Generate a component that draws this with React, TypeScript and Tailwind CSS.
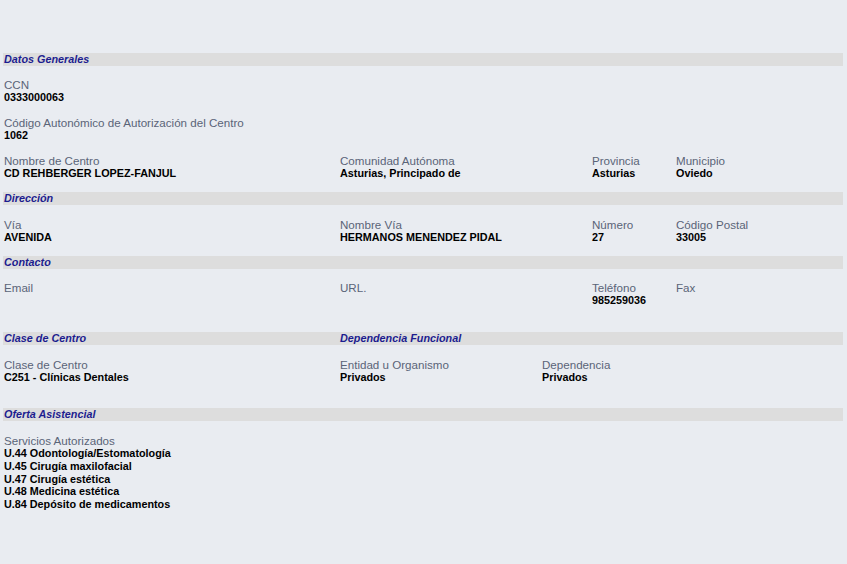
import React from 'react';

interface Field {
    label: string;
    value?: string;
}

const SectionBar: React.FC<{ titles: { text: string; col: string }[]; cols: string }> = ({ titles, cols }) => (
    <div className={`grid ${cols} h-[13px] bg-[#dddddd]`}>
        {titles.map(t => (
            <div key={t.text} className={`${t.col} pl-[1px] text-[10.8px] leading-[13px] font-bold italic text-[#1c1c8f]`}>
                {t.text}
            </div>
        ))}
    </div>
);

const FieldBlock: React.FC<{ field: Field }> = ({ field }) => (
    <div className="pl-[1px]">
        <div className="text-[11.6px] leading-[13px] text-[#5a6478]">{field.label}</div>
        <div className="text-[10.8px] leading-[13px] font-bold text-black h-[13px]">{field.value}</div>
    </div>
);

const FieldRow: React.FC<{ fields: Field[]; cols: string; className?: string }> = ({ fields, cols, className }) => (
    <div className={`grid ${cols} ${className || ''}`}>
        {fields.map(f => (
            <FieldBlock key={f.label} field={f} />
        ))}
    </div>
);

const fourCols = 'grid-cols-[336px_252px_84px_1fr]';
const threeCols = 'grid-cols-[336px_202px_1fr]';

const servicios = [
    'U.44 Odontología/Estomatología',
    'U.45 Cirugía maxilofacial',
    'U.47 Cirugía estética',
    'U.48 Medicina estética',
    'U.84 Depósito de medicamentos',
];

export default function App() {
    return (
        <div
            className="w-[847px] h-[564px] bg-[#e9ecf1] pt-[53px] pl-[3px] pr-[4px]"
            style={{ fontFamily: '"Liberation Sans", Arial, sans-serif' }}
        >
            <SectionBar cols="grid-cols-1" titles={[{ text: 'Datos Generales', col: '' }]} />
            <FieldRow className="mt-[12px]" cols="grid-cols-1" fields={[{ label: 'CCN', value: '0333000063' }]} />
            <FieldRow
                className="mt-[12px]"
                cols="grid-cols-1"
                fields={[{ label: 'Código Autonómico de Autorización del Centro', value: '1062' }]}
            />
            <FieldRow
                className="mt-[12px]"
                cols={fourCols}
                fields={[
                    { label: 'Nombre de Centro', value: 'CD REHBERGER LOPEZ-FANJUL' },
                    { label: 'Comunidad Autónoma', value: 'Asturias, Principado de' },
                    { label: 'Provincia', value: 'Asturias' },
                    { label: 'Municipio', value: 'Oviedo' },
                ]}
            />

            <div className="mt-[12px]">
                <SectionBar cols="grid-cols-1" titles={[{ text: 'Dirección', col: '' }]} />
            </div>
            <FieldRow
                className="mt-[13px]"
                cols={fourCols}
                fields={[
                    { label: 'Vía', value: 'AVENIDA' },
                    { label: 'Nombre Vía', value: 'HERMANOS MENENDEZ PIDAL' },
                    { label: 'Número', value: '27' },
                    { label: 'Código Postal', value: '33005' },
                ]}
            />

            <div className="mt-[12px]">
                <SectionBar cols="grid-cols-1" titles={[{ text: 'Contacto', col: '' }]} />
            </div>
            <FieldRow
                className="mt-[12px]"
                cols={fourCols}
                fields={[
                    { label: 'Email' },
                    { label: 'URL.' },
                    { label: 'Teléfono', value: '985259036' },
                    { label: 'Fax' },
                ]}
            />

            <div className="mt-[25px]">
                <SectionBar
                    cols={threeCols}
                    titles={[
                        { text: 'Clase de Centro', col: '' },
                        { text: 'Dependencia Funcional', col: 'col-span-2' },
                    ]}
                />
            </div>
            <FieldRow
                className="mt-[13px]"
                cols={threeCols}
                fields={[
                    { label: 'Clase de Centro', value: 'C251 - Clínicas Dentales' },
                    { label: 'Entidad u Organismo', value: 'Privados' },
                    { label: 'Dependencia', value: 'Privados' },
                ]}
            />

            <div className="mt-[24px]">
                <SectionBar cols="grid-cols-1" titles={[{ text: 'Oferta Asistencial', col: '' }]} />
            </div>
            <div className="mt-[13px] pl-[1px]">
                <div className="text-[11.6px] leading-[13px] text-[#5a6478]">Servicios Autorizados</div>
                {servicios.map(s => (
                    <div key={s} className="text-[10.8px] leading-[12.75px] font-bold text-black">
                        {s}
                    </div>
                ))}
            </div>
        </div>
    );
}
